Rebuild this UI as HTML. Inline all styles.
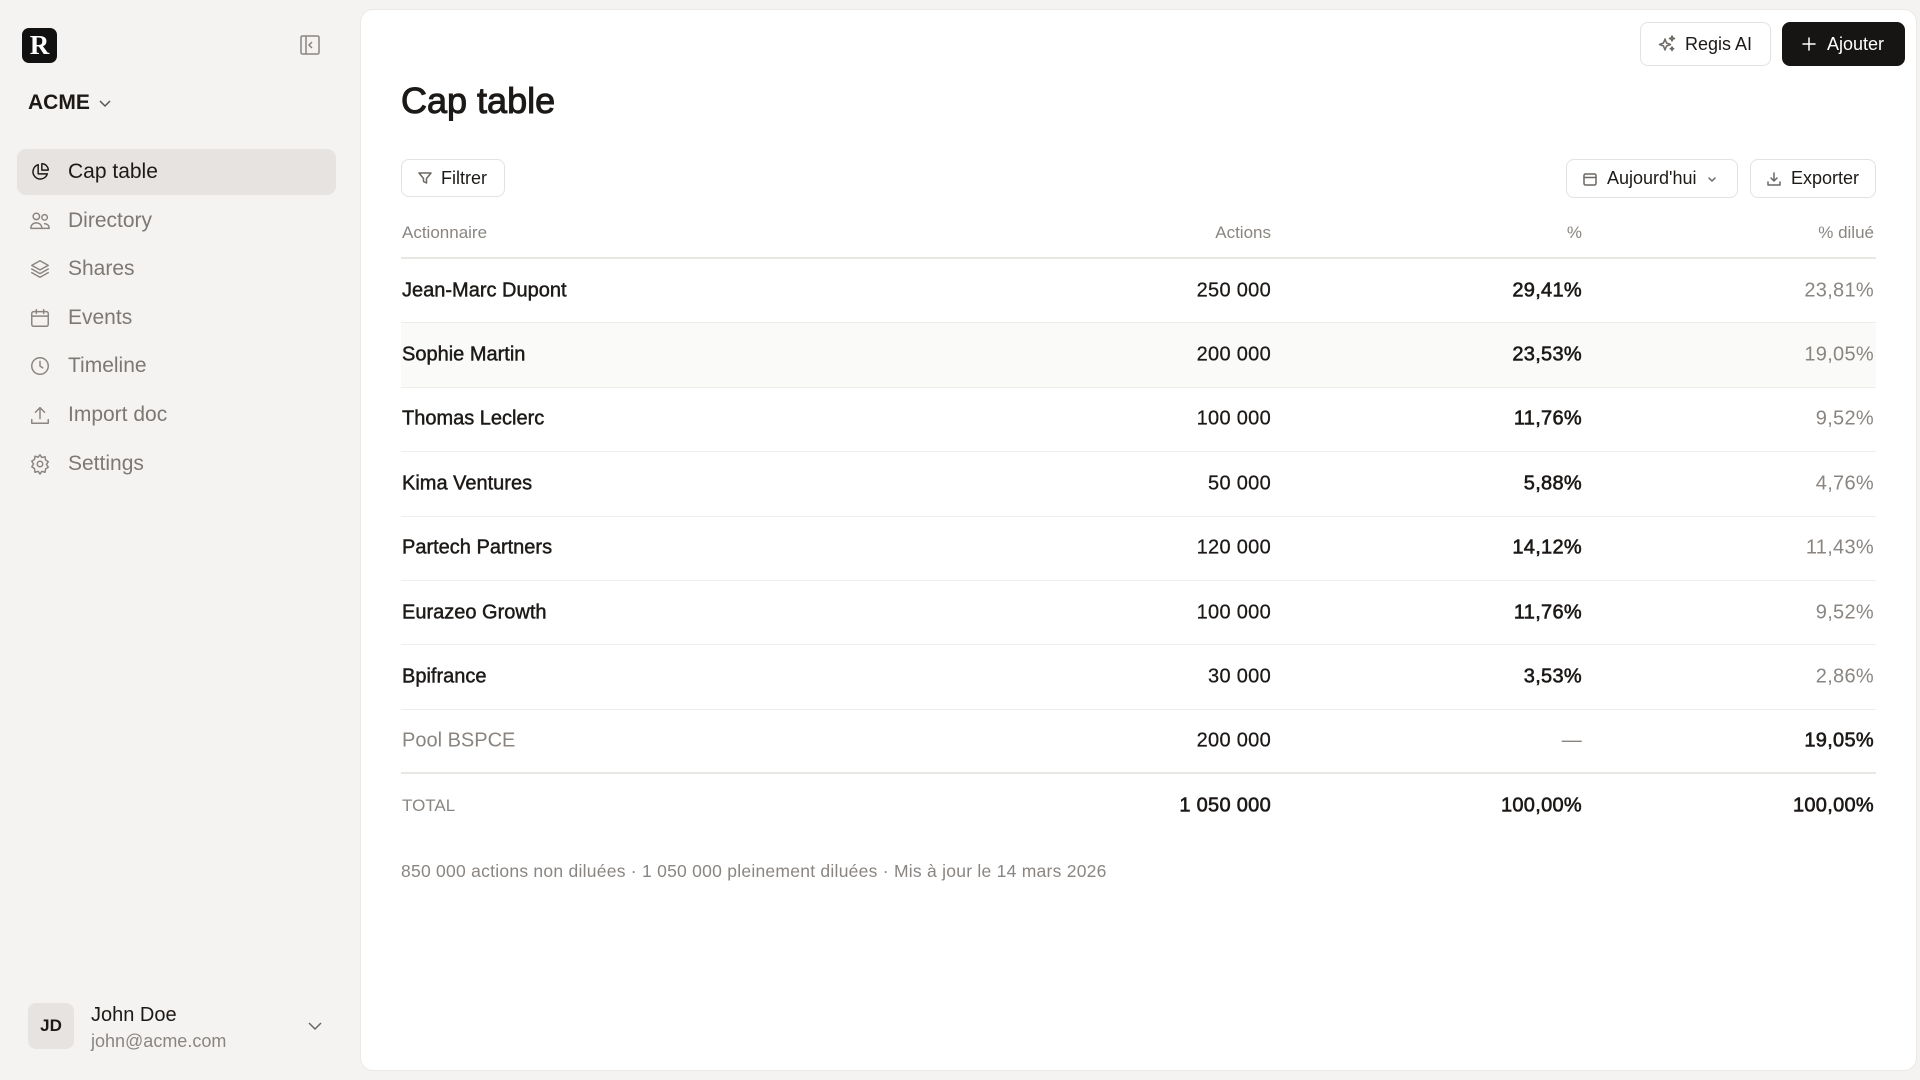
<!DOCTYPE html>
<html><head><meta charset="utf-8"><style>
*{margin:0;padding:0;box-sizing:border-box}
body{width:1920px;height:1080px;background:#f5f3f1;font-family:"Liberation Sans",sans-serif;color:#1c1917;position:relative;overflow:hidden}
.a{position:absolute}
.nav{position:absolute;left:17px;width:319px;height:46px;display:flex;align-items:center;font-size:21px;color:#7d7874}
.nav svg{position:absolute;left:12px;width:22px;height:22px;fill:none;stroke:#8a8581;stroke-width:1.6;stroke-linecap:round;stroke-linejoin:round}
.nav span{position:absolute;left:51px}
.main{position:absolute;left:361px;top:10px;width:1555px;height:1060px;background:#fff;border-radius:12px;box-shadow:0 0 0 1px #ebe8e5}
.btn{position:absolute;border:1.5px solid #e4e2df;border-radius:8px;background:#fff;display:flex;align-items:center;font-size:18px;color:#1c1917}
.btn svg{fill:none;stroke:#6b6763;stroke-width:1.5;stroke-linecap:round;stroke-linejoin:round}
.row{position:absolute;left:401px;width:1475px;height:64.4px;border-bottom:1.5px solid #efedeb;font-size:20px}
.row div{position:absolute;top:50%;transform:translateY(-50%)}
.c0{left:1px;color:#1c1917;-webkit-text-stroke:0.45px #1c1917}
.c1{right:605px;color:#1c1917;-webkit-text-stroke:0.25px #1c1917;letter-spacing:0.3px}
.c2{right:294px;color:#1c1917;-webkit-text-stroke:0.6px #1c1917;letter-spacing:0.3px}
.c3{right:2px;color:#8a8581;letter-spacing:0.3px}
</style></head><body>
<div class="a" style="left:22px;top:28px;width:35px;height:35px;background:#111;border-radius:7px;color:#fff;font-family:'Liberation Serif',serif;font-weight:700;font-size:27px;text-align:center;line-height:35px">R</div>
<svg class="a" style="left:300px;top:35px" width="20" height="20" viewBox="0 0 20 20" fill="none" stroke="#8a8581" stroke-width="1.5"><rect x="1" y="1" width="18" height="18" rx="1.5"/><line x1="6" y1="1" x2="6" y2="19"/><path d="M12 7l-3 3 3 3"/></svg>
<div class="a" style="left:28px;top:91px;font-size:21px;font-weight:700">ACME</div>
<svg class="a" style="left:98px;top:98px" width="14" height="10" viewBox="0 0 14 10" fill="none" stroke="#555" stroke-width="1.5"><path d="M2 3l5 5 5-5"/></svg>

<div class="nav" style="top:149px;background:#e6e3e0;border-radius:9px;color:#1c1917"><svg viewBox="0 0 24 24" style="stroke:#1c1917"><path d="M20 14A8 8 0 1 1 10 4v10z"/><path d="M14 3a7 7 0 0 1 7 7h-7z"/></svg><span>Cap table</span></div>
<div class="nav" style="top:198px"><svg viewBox="0 0 24 24"><circle cx="8" cy="7" r="3.5"/><circle cx="17" cy="8" r="3"/><path d="M2 20c0-4 3-6 6-6s6 2 6 6z"/><path d="M14 20h8c0-3-2-5-5-5"/></svg><span>Directory</span></div>
<div class="nav" style="top:246px"><svg viewBox="0 0 24 24"><path d="M12 3l9 5-9 5-9-5z"/><path d="M3 12l9 5 9-5"/><path d="M3 16l9 5 9-5"/></svg><span>Shares</span></div>
<div class="nav" style="top:295px"><svg viewBox="0 0 24 24"><rect x="3" y="5" width="18" height="16" rx="2"/><path d="M3 10h18M8 3v4M16 3v4"/></svg><span>Events</span></div>
<div class="nav" style="top:343px"><svg viewBox="0 0 24 24"><circle cx="12" cy="12" r="9"/><path d="M12 7v5l3 2"/></svg><span>Timeline</span></div>
<div class="nav" style="top:392px"><svg viewBox="0 0 24 24"><path d="M12 16V4M7 9l5-5 5 5"/><path d="M3 17v4h18v-4"/></svg><span>Import doc</span></div>
<div class="nav" style="top:441px"><svg viewBox="0 0 24 24"><circle cx="12" cy="12" r="3"/><path d="M12 2l2 3 3.5-1 .5 3.5 3 2-2 3 2 3-3 2-.5 3.5-3.5-1-2 3-2-3-3.5 1L6 17l-3-2 2-3-2-3 3-2 .5-3.5 3.5 1z"/></svg><span>Settings</span></div>

<div class="a" style="left:28px;top:1003px;width:46px;height:46px;background:#e6e3e0;border-radius:8px;font-size:17px;font-weight:700;text-align:center;line-height:46px">JD</div>
<div class="a" style="left:91px;top:1004px;font-size:20px;color:#1c1917">John Doe</div>
<div class="a" style="left:91px;top:1031px;font-size:18px;color:#8a8581">john@acme.com</div>
<svg class="a" style="left:307px;top:1021px" width="16" height="10" viewBox="0 0 16 10" fill="none" stroke="#666" stroke-width="1.5"><path d="M2 2l6 6 6-6"/></svg>

<div class="main"></div>
<div class="btn" style="left:1640px;top:22px;width:131px;height:44px;padding-left:16px"><svg width="20" height="20" viewBox="0 0 20 20"><path d="M8 5l1.5 4 4 1.5-4 1.5L8 16l-1.5-4-4-1.5 4-1.5z"/><path d="M15 2l.7 1.8 1.8.7-1.8.7L15 7l-.7-1.8-1.8-.7 1.8-.7z"/><path d="M15 13l.5 1.2 1.2.5-1.2.5L15 16.5l-.5-1.3-1.2-.5 1.2-.5z"/></svg><span style="margin-left:8px">Regis AI</span></div>
<div class="btn" style="left:1782px;top:22px;width:123px;height:44px;background:#171514;border-color:#171514;color:#fff;padding-left:18px"><svg width="16" height="16" viewBox="0 0 16 16" style="stroke:#fff"><path d="M8 2v12M2 8h12"/></svg><span style="margin-left:10px">Ajouter</span></div>

<div class="a" style="left:401px;top:80px;font-size:36px;font-weight:400;-webkit-text-stroke:1px #1c1917">Cap table</div>

<div class="btn" style="left:401px;top:159px;width:104px;height:38px;padding-left:15px"><svg width="16" height="16" viewBox="0 0 16 16"><path d="M2 3h12l-4.5 5.5V13l-3-1.5V8.5z"/></svg><span style="margin-left:8px">Filtrer</span></div>
<div class="btn" style="left:1566px;top:159px;width:172px;height:39px;padding-left:15px"><svg width="16" height="16" viewBox="0 0 16 16"><rect x="2" y="3" width="12" height="11" rx="1.5"/><path d="M2 6.5h12"/></svg><span style="margin-left:9px">Aujourd'hui</span><svg width="12" height="10" viewBox="0 0 12 10" style="margin-left:9px"><path d="M3 4l3 3 3-3"/></svg></div>
<div class="btn" style="left:1750px;top:159px;width:126px;height:39px;padding-left:15px"><svg width="16" height="16" viewBox="0 0 16 16"><path d="M8 2v8M5 7l3 3 3-3M2 11v3h12v-3"/></svg><span style="margin-left:9px">Exporter</span></div>

<div class="row" style="top:200px;height:59px;border-bottom:2px solid #e9e7e4;font-size:17px;color:#8a8581">
<div style="left:1px;top:33px">Actionnaire</div><div style="right:605px;top:33px">Actions</div><div style="right:294px;top:33px">%</div><div style="right:2px;top:33px">% dilué</div></div>

<div class="row" style="top:259px"><div class="c0">Jean-Marc Dupont</div><div class="c1">250 000</div><div class="c2">29,41%</div><div class="c3">23,81%</div></div>
<div class="row" style="top:323.4px;background:#fafaf9"><div class="c0">Sophie Martin</div><div class="c1">200 000</div><div class="c2">23,53%</div><div class="c3">19,05%</div></div>
<div class="row" style="top:387.8px"><div class="c0">Thomas Leclerc</div><div class="c1">100 000</div><div class="c2">11,76%</div><div class="c3">9,52%</div></div>
<div class="row" style="top:452.2px"><div class="c0">Kima Ventures</div><div class="c1">50 000</div><div class="c2">5,88%</div><div class="c3">4,76%</div></div>
<div class="row" style="top:516.6px"><div class="c0">Partech Partners</div><div class="c1">120 000</div><div class="c2">14,12%</div><div class="c3">11,43%</div></div>
<div class="row" style="top:581px"><div class="c0">Eurazeo Growth</div><div class="c1">100 000</div><div class="c2">11,76%</div><div class="c3">9,52%</div></div>
<div class="row" style="top:645.4px"><div class="c0">Bpifrance</div><div class="c1">30 000</div><div class="c2">3,53%</div><div class="c3">2,86%</div></div>
<div class="row" style="top:709.8px;border-bottom:2px solid #e9e7e4"><div class="c0" style="-webkit-text-stroke:0;color:#8a8581">Pool BSPCE</div><div class="c1">200 000</div><div class="c2" style="-webkit-text-stroke:0;color:#8a8581">—</div><div class="c3" style="-webkit-text-stroke:0.6px #1c1917;color:#1c1917">19,05%</div></div>
<div class="row" style="top:774px;border:none"><div class="c0" style="-webkit-text-stroke:0;color:#8a8581;font-size:17px">TOTAL</div><div class="c1" style="-webkit-text-stroke:0.6px #1c1917">1 050 000</div><div class="c2">100,00%</div><div class="c3" style="-webkit-text-stroke:0.6px #1c1917;color:#1c1917">100,00%</div></div>

<div class="a" style="left:401px;top:861px;font-size:17.5px;color:#8a8581;letter-spacing:0.25px">850 000 actions non diluées · 1 050 000 pleinement diluées · Mis à jour le 14 mars 2026</div>
</body></html>
